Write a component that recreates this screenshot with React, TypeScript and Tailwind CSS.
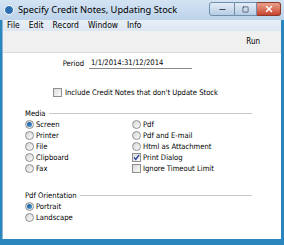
import { Minus, Square, X } from "lucide-react";

const Radio = ({ on }: { on?: boolean }) => (
  <span className="w-[9px] h-[9px] rounded-full border border-[#8f8f8f] bg-gradient-to-br from-[#d6d6d6] to-[#fbfbfb] flex items-center justify-center shrink-0">
    {on && <span className="w-[5px] h-[5px] rounded-full bg-gradient-to-br from-[#0f4f8a] to-[#4fa3e0]"></span>}
  </span>
);

const Check = ({ on }: { on?: boolean }) => (
  <span className="w-[9px] h-[9px] border border-[#8f8f8f] bg-gradient-to-br from-[#dcdcdc] to-[#fafafa] flex items-center justify-center shrink-0">
    {on && (
      <svg width="7" height="7" viewBox="0 0 7 7">
        <path d="M1 3.5 L2.8 5.5 L6 1" stroke="#2a3f9a" strokeWidth="1.3" fill="none" />
      </svg>
    )}
  </span>
);

const Row = ({ children }: { children: React.ReactNode }) => (
  <div className="h-[11px] flex items-center gap-[2px]">{children}</div>
);

const App = () => {
  const left = ["Screen", "Printer", "File", "Clipboard", "Fax"];
  const right = [
    { t: "Pdf", type: "radio" },
    { t: "Pdf and E-mail", type: "radio" },
    { t: "Html as Attachment", type: "radio" },
    { t: "Print Dialog", type: "check", on: true },
    { t: "Ignore Timeout Limit", type: "check" },
  ];

  return (
    <div className="w-[284px] h-[245px] bg-[#2b86bd] p-[3px] pt-0 flex flex-col overflow-hidden">
      {/* Title bar */}
      <div className="h-[20px] -mx-[3px] px-[3px] bg-gradient-to-b from-[#d3e3f3] to-[#bcd3ea] flex items-center shrink-0" style={{ fontFamily: '"Noto Sans", sans-serif' }}>
        <span className="w-[10px] h-[10px] rounded-full bg-[#2d6fb0] border border-white ml-[1px] mr-[4px]"></span>
        <span className="text-[9.3px] text-black leading-none">Specify Credit Notes, Updating Stock</span>
        <div className="ml-auto flex items-start h-full pt-[2px] gap-0">
          <div className="w-[26px] h-[14px] border border-[#6f8eab] rounded-l-[3px] bg-gradient-to-b from-[#e3edf7] to-[#b7cde3] flex items-center justify-center">
            <Minus size={9} strokeWidth={3} color="#3b4a5c" />
          </div>
          <div className="w-[22px] h-[14px] border border-l-0 border-[#6f8eab] bg-gradient-to-b from-[#e3edf7] to-[#b7cde3] flex items-center justify-center">
            <Square size={7} strokeWidth={2.5} color="#3b4a5c" />
          </div>
          <div className="w-[24px] h-[14px] border border-l-0 border-[#8b3a2c] rounded-r-[3px] bg-gradient-to-b from-[#e9a08e] to-[#c7422b] flex items-center justify-center">
            <X size={10} strokeWidth={3.5} color="#ffffff" />
          </div>
        </div>
      </div>

      <div className="flex-1 flex flex-col bg-white -ml-[1px] border-l-[1px] border-[#8fb6d8]" style={{ fontFamily: '"DejaVu Sans Condensed", "DejaVu Sans", sans-serif' }}>
        {/* Menu bar */}
        <div className="h-[11px] bg-gradient-to-b from-[#e8eef6] to-[#dde7f2] flex items-center text-[8.5px] text-black gap-[9px] px-[4px] shrink-0">
          <span>File</span>
          <span>Edit</span>
          <span>Record</span>
          <span>Window</span>
          <span>Info</span>
        </div>
        {/* Toolbar */}
        <div className="h-[22px] bg-[#f0f0f0] border-b border-[#dadada] flex items-center justify-end pr-[21px] text-[8px] text-black shrink-0">
          Run
        </div>

        {/* Content */}
        <div className="flex-1 text-[7.6px] text-black pl-[19px] pr-[29px]">
          <div className="h-[17px] mt-[2px] flex items-center">
            <span className="w-[67px] text-right pr-[5px]">Period</span>
            <span className="w-[103px] border-b border-[#8a8a8a] leading-[10px] pl-[2px]">1/1/2014:31/12/2014</span>
          </div>
          <div className="h-[11px] mt-[15px] flex items-center gap-[3px] pl-[31px]">
            <Check />
            <span>Include Credit Notes that don't Update Stock</span>
          </div>

          <div className="mt-[10px] h-[11px] flex items-center gap-[3px] pl-[3px]">
            <span>Media</span>
            <div className="flex-1 border-t border-[#c8c8c8]"></div>
          </div>
          <div className="flex pl-[3px]">
            <div className="w-[107px] flex flex-col">
              {left.map((t, i) => (
                <Row key={t}>
                  <Radio on={i === 0} />
                  <span>{t}</span>
                </Row>
              ))}
            </div>
            <div className="flex flex-col">
              {right.map((r) => (
                <Row key={r.t}>
                  {r.type === "radio" ? <Radio /> : <Check on={r.on} />}
                  <span>{r.t}</span>
                </Row>
              ))}
            </div>
          </div>

          <div className="mt-[16px] h-[11px] flex items-center gap-[3px] pl-[3px]">
            <span>Pdf Orientation</span>
            <div className="flex-1 border-t border-[#c8c8c8]"></div>
          </div>
          <div className="flex flex-col pl-[3px]">
            <Row>
              <Radio on />
              <span>Portrait</span>
            </Row>
            <Row>
              <Radio />
              <span>Landscape</span>
            </Row>
          </div>
        </div>
      </div>
      <div className="h-[3px] shrink-0"></div>
    </div>
  );
};

export default App;
